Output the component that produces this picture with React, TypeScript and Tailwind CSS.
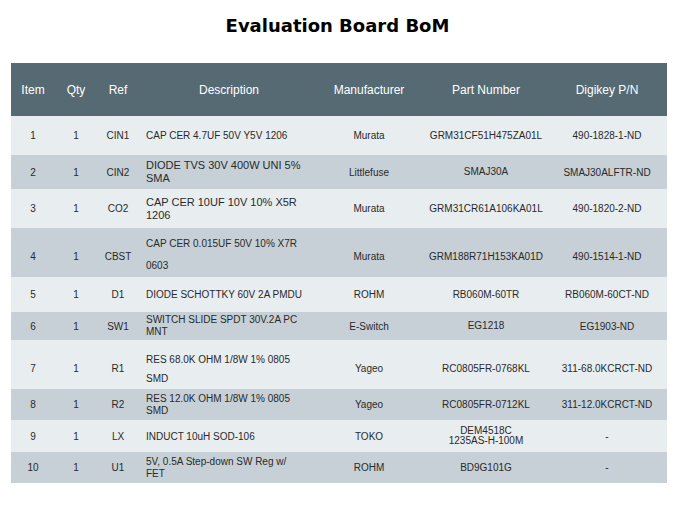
type Row = {
  item: string;
  ref: string;
  desc: string[];
  descClass: string;
  mfr: string;
  part: string[];
  digikey: string;
  h: string;
  shift?: string;
  descShift?: string;
};

const rows: Row[] = [
  { item: "1", ref: "CIN1", desc: ["CAP CER 4.7UF 50V Y5V 1206"], descClass: "text-[10px] leading-[13px]", mfr: "Murata", part: ["GRM31CF51H475ZA01L"], digikey: "490-1828-1-ND", h: "h-[39px]" },
  { item: "2", ref: "CIN2", desc: ["DIODE TVS 30V 400W UNI 5%", "SMA"], descClass: "text-[11px] leading-[13px]", mfr: "Littlefuse", part: ["SMAJ30A"], digikey: "SMAJ30ALFTR-ND", h: "h-[34px]" },
  { item: "3", ref: "CO2", desc: ["CAP CER 10UF 10V 10% X5R", "1206"], descClass: "text-[11px] leading-[13px]", mfr: "Murata", part: ["GRM31CR61A106KA01L"], digikey: "490-1820-2-ND", h: "h-[39px]" },
  { item: "4", ref: "CBST", desc: ["CAP CER 0.015UF 50V 10% X7R", "0603"], descClass: "text-[10px] leading-[22px]", mfr: "Murata", part: ["GRM188R71H153KA01D"], digikey: "490-1514-1-ND", h: "h-[49px]", shift: "pt-2", descShift: "pt-[5px]" },
  { item: "5", ref: "D1", desc: ["DIODE SCHOTTKY 60V 2A PMDU"], descClass: "text-[10px] leading-[13px]", mfr: "ROHM", part: ["RB060M-60TR"], digikey: "RB060M-60CT-ND", h: "h-[35px]" },
  { item: "6", ref: "SW1", desc: ["SWITCH SLIDE SPDT 30V.2A PC", "MNT"], descClass: "text-[10px] leading-[12px]", mfr: "E-Switch", part: ["EG1218"], digikey: "EG1903-ND", h: "h-[28px]" },
  { item: "7", ref: "R1", desc: ["RES 68.0K OHM 1/8W 1% 0805", "SMD"], descClass: "text-[10px] leading-[19px]", mfr: "Yageo", part: ["RC0805FR-0768KL"], digikey: "311-68.0KCRCT-ND", h: "h-[49px]", shift: "pt-2", descShift: "pt-2" },
  { item: "8", ref: "R2", desc: ["RES 12.0K OHM 1/8W 1% 0805", "SMD"], descClass: "text-[10px] leading-[12px]", mfr: "Yageo", part: ["RC0805FR-0712KL"], digikey: "311-12.0KCRCT-ND", h: "h-[31px]" },
  { item: "9", ref: "LX", desc: ["INDUCT 10uH SOD-106"], descClass: "text-[10px] leading-[13px]", mfr: "TOKO", part: ["DEM4518C", "1235AS-H-100M"], digikey: "-", h: "h-[32px]" },
  { item: "10", ref: "U1", desc: ["5V, 0.5A Step-down SW Reg w/", "FET"], descClass: "text-[10px] leading-[12px]", mfr: "ROHM", part: ["BD9G101G"], digikey: "-", h: "h-[31px]" },
];

export default function App() {
  return (
    <div className="w-[675px] h-[506px] bg-white font-['Liberation_Sans',Arial,sans-serif]">
      <div className="h-[50px] flex items-center justify-center">
        <h1 className="font-['DejaVu_Sans',Verdana,sans-serif] font-bold text-[18px] text-black">
          Evaluation Board BoM
        </h1>
      </div>

      <table className="ml-[11px] mt-[13px] w-[656px] table-fixed border-collapse">
        <colgroup>
          <col className="w-[44px]" />
          <col className="w-[42px]" />
          <col className="w-[42px]" />
          <col className="w-[180px]" />
          <col className="w-[100px]" />
          <col className="w-[134px]" />
          <col className="w-[114px]" />
        </colgroup>
        <thead>
          <tr className="h-[53px] bg-[#566a73] text-white text-[12px] font-normal">
            <th className="font-normal text-center">Item</th>
            <th className="font-normal text-center">Qty</th>
            <th className="font-normal text-center">Ref</th>
            <th className="font-normal text-center">Description</th>
            <th className="font-normal text-center">Manufacturer</th>
            <th className="font-normal text-center">Part Number</th>
            <th className="font-normal text-center pr-[6px]">Digikey P/N</th>
          </tr>
        </thead>
        <tbody className="text-[10px] text-[#2a2a2a]">
          {rows.map((r, i) => (
            <tr key={r.item} className={`${r.h} ${i % 2 === 0 ? "bg-[#e8edf0]" : "bg-[#c6d0d6]"}`}>
              <td className={`p-0 text-center ${r.shift ?? ""}`}>{r.item}</td>
              <td className={`p-0 text-center ${r.shift ?? ""}`}>1</td>
              <td className={`p-0 text-center ${r.shift ?? ""}`}>{r.ref}</td>
              <td className={`p-0 pl-[7px] text-left ${r.descShift ?? ""}`}>
                <div className={r.descClass}>
                  {r.desc.map((d) => (
                    <div key={d}>{d}</div>
                  ))}
                </div>
              </td>
              <td className={`p-0 text-center ${r.shift ?? ""}`}>{r.mfr}</td>
              <td className={`p-0 text-center leading-[10px] ${r.shift ?? ""}`}>
                {r.part.map((p) => (
                  <div key={p}>{p}</div>
                ))}
              </td>
              <td className={`p-0 pr-[6px] text-center ${r.shift ?? ""}`}>{r.digikey}</td>
            </tr>
          ))}
        </tbody>
      </table>
    </div>
  );
}
